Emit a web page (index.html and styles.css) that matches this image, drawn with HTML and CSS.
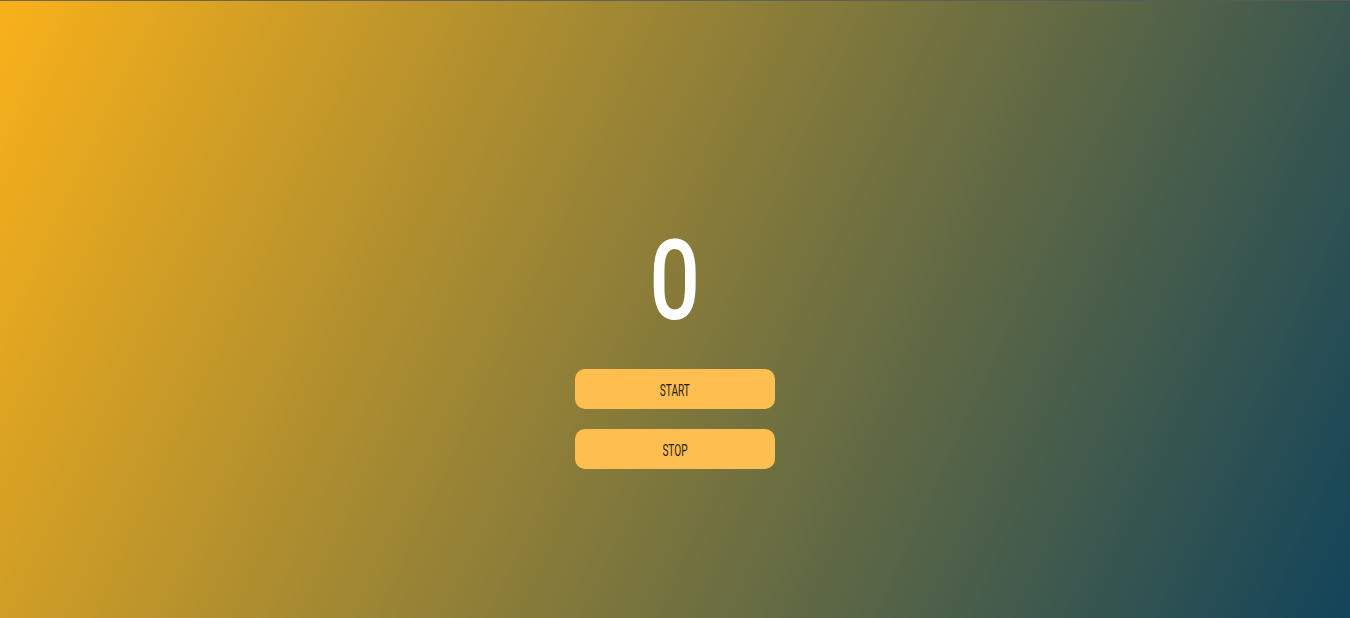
FILE: index.html
```html
<!DOCTYPE html>
<html lang="en">
<head>
<meta charset="utf-8">
<title>Counter</title>
<link rel="stylesheet" href="styles.css">
</head>
<body>
<main class="app">
  <div class="count"><span class="narrow">0</span></div>
  <div class="controls">
    <button class="btn"><span class="narrow">START</span></button>
    <button class="btn"><span class="narrow">STOP</span></button>
  </div>
</main>
</body>
</html>
```
FILE: styles.css
```css
html, body {
  margin: 0;
  height: 100%;
}
body {
  background: linear-gradient(115deg, #f9b11a 0%, #12445a 100%);
  border-top: 1px solid rgba(90, 90, 90, 0.85);
  box-sizing: border-box;
  font-family: Roboto, "Liberation Sans", sans-serif;
  overflow: hidden;
}
.app {
  display: flex;
  flex-direction: column;
  align-items: center;
  padding-top: 224px;
}
.narrow {
  display: inline-block;
}
.count {
  color: #ffffff;
  font-size: 112px;
  font-weight: 500;
  line-height: 1;
  height: 112px;
}
.count .narrow {
  transform: scaleX(0.8);
}
.controls {
  display: flex;
  flex-direction: column;
  gap: 20px;
  margin-top: 32px;
}
.btn {
  width: 200px;
  height: 40px;
  border: none;
  border-radius: 10px;
  background: #ffbf50;
  color: #1c1c1c;
  font-family: inherit;
  font-size: 16px;
  padding: 2px 0 0;
  cursor: pointer;
}
.btn .narrow {
  transform: scaleX(0.63);
}
```
